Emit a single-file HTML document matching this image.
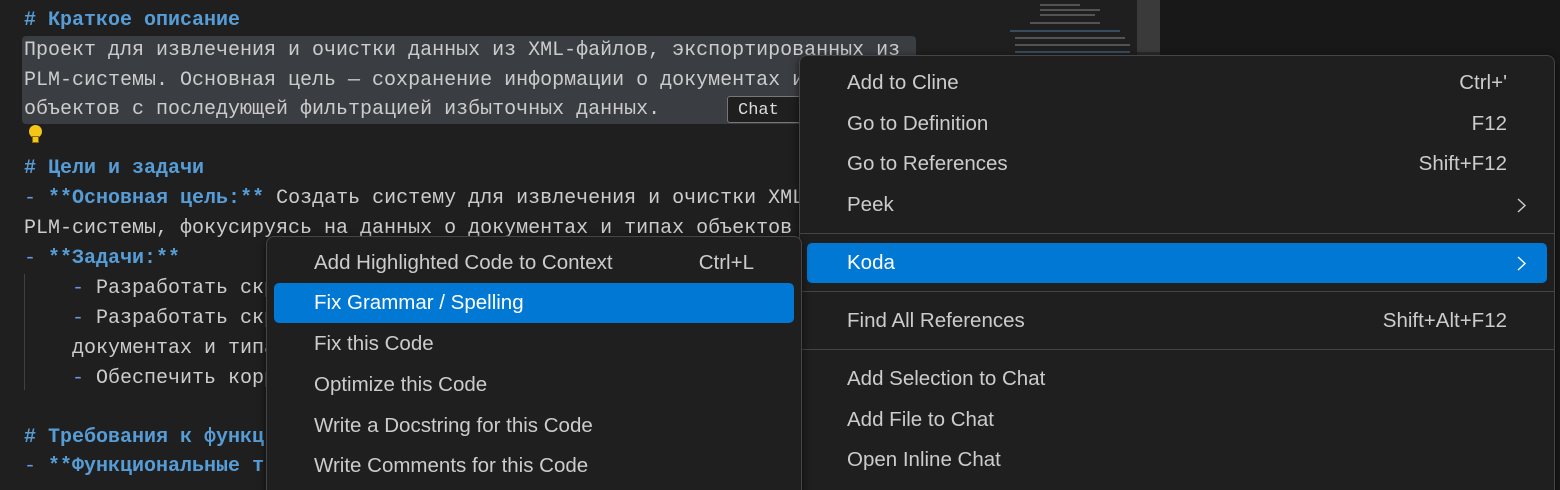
<!DOCTYPE html>
<html><head><meta charset="utf-8"><style>
html,body{margin:0;width:1560px;height:490px;overflow:hidden}
body{background:#1f1f1f;position:relative;font-family:"Liberation Mono","DejaVu Sans Mono",monospace;}
.ed{position:absolute;left:0;top:0;width:1160px;height:490px;background:#1f1f1f}
.right{position:absolute;left:1160px;top:0;width:400px;height:490px;background:#181818}
.sb{position:absolute;left:1137px;top:0;width:23px;height:490px;background:#2a2a2a}
.sbt{position:absolute;left:1137px;top:0;width:23px;height:52px;background:#3a3a3a}
.l{position:absolute;left:24px;font-size:20px;color:#cccccc;white-space:pre;line-height:30px;height:30px}
.h{color:#569cd6;font-weight:bold}
.b{color:#569cd6;font-weight:bold}
.d{color:#6796e6}
.sel{position:absolute;left:22px;top:36px;width:894px;height:88px;background:#3a3d41;border-radius:4px}
.guide{position:absolute;left:24px;width:1px;background:#404040}
.chat{position:absolute;left:727px;top:96px;width:80px;height:27px;border:1px solid #777;border-radius:3px;font-size:17px;color:#ddd;line-height:27px;padding-left:10px;box-sizing:border-box;background:#1f1f1f}
.menu{position:absolute;background:#1f1f1f;border:1px solid #454545;border-radius:8px;font-family:"Liberation Sans","DejaVu Sans",sans-serif;font-size:20.5px;color:#cccccc;box-shadow:0 2px 8px rgba(0,0,0,.6);overflow:hidden}
.it{position:absolute;height:40px;line-height:40px;border-radius:5px}
.it .t{position:absolute;left:40px}
.it .k{position:absolute;right:40px}
.hl{background:#0078d4;color:#fff}
.sep{position:absolute;height:1px;background:#454545;left:0;right:0}
.chev{position:absolute;right:20px;top:13px;width:10px;height:15px}
.mm{position:absolute;height:2px;background:#4a6a8a;opacity:.6}
</style></head><body>
<div class="ed"></div>
<div class="right"></div>
<div class="sb"></div><div class="sbt"></div>
<div class="mm" style="left:1040px;top:4px;width:40px;background:#777"></div>
<div class="mm" style="left:1040px;top:9px;width:60px;background:#777"></div>
<div class="mm" style="left:1040px;top:14px;width:55px;background:#777"></div>
<div class="mm" style="left:1030px;top:22px;width:70px;background:#777"></div>
<div class="mm" style="left:1010px;top:30px;width:110px"></div>
<div class="mm" style="left:1015px;top:37px;width:110px;background:#777"></div>
<div class="mm" style="left:1015px;top:44px;width:115px;background:#777"></div>
<div class="mm" style="left:1015px;top:51px;width:115px"></div>
<div class="sel"></div>
<div class="guide" style="top:274px;height:116px"></div>
<div class="l h" style="top:6px"># Краткое описание</div>
<div class="l" style="top:36px">Проект для извлечения и очистки данных из XML-файлов, экспортированных из</div>
<div class="l" style="top:66px">PLM-системы. Основная цель — сохранение информации о документах и</div>
<div class="l" style="top:95px">объектов с последующей фильтрацией избыточных данных.</div>
<div style="position:absolute;left:29px;top:125px;width:13px;height:13px;border-radius:50%;background:#f5c518"></div>
<div style="position:absolute;left:32px;top:136px;width:7px;height:7px;background:#f5c518;border:1px solid #8a6d00;box-sizing:border-box"></div>
<div class="l h" style="top:154px"># Цели и задачи</div>
<div class="l" style="top:184px"><span class="d">-</span> <span class="b">**Основная цель:**</span> Создать систему для извлечения и очистки XML</div>
<div class="l" style="top:214px">PLM-системы, фокусируясь на данных о документах и типах объектов</div>
<div class="l" style="top:244px"><span class="d">-</span> <span class="b">**Задачи:**</span></div>
<div class="l" style="top:274px">    <span class="d">-</span> Разработать скрипт</div>
<div class="l" style="top:304px">    <span class="d">-</span> Разработать скрипт</div>
<div class="l" style="top:334px">    документах и типах</div>
<div class="l" style="top:364px">    <span class="d">-</span> Обеспечить корр</div>
<div class="l h" style="top:423px"># Требования к функц</div>
<div class="l" style="top:452px"><span class="d">-</span> <span class="b">**Функциональные т</span></div>
<div class="chat">Chat</div>

<div class="menu" style="left:799px;top:55px;width:754px;height:445px">
<div class="it" style="left:7px;right:7px;top:7px"><span class="t">Add to Cline</span><span class="k">Ctrl+'</span></div>
<div class="it" style="left:7px;right:7px;top:48px"><span class="t">Go to Definition</span><span class="k">F12</span></div>
<div class="it" style="left:7px;right:7px;top:88px"><span class="t">Go to References</span><span class="k">Shift+F12</span></div>
<div class="it" style="left:7px;right:7px;top:129px"><span class="t">Peek</span><svg class="chev" viewBox="0 0 10 15"><path d="M1 1 L8 7.5 L1 14" fill="none" stroke="#cccccc" stroke-width="1.4"/></svg></div>
<div class="sep" style="top:177px"></div>
<div class="it hl" style="left:7px;right:7px;top:187px"><span class="t">Koda</span><svg class="chev" viewBox="0 0 10 15"><path d="M1 1 L8 7.5 L1 14" fill="none" stroke="#ffffff" stroke-width="1.4"/></svg></div>
<div class="sep" style="top:235px"></div>
<div class="it" style="left:7px;right:7px;top:245px"><span class="t">Find All References</span><span class="k">Shift+Alt+F12</span></div>
<div class="sep" style="top:293px"></div>
<div class="it" style="left:7px;right:7px;top:303px"><span class="t">Add Selection to Chat</span></div>
<div class="it" style="left:7px;right:7px;top:344px"><span class="t">Add File to Chat</span></div>
<div class="it" style="left:7px;right:7px;top:384px"><span class="t">Open Inline Chat</span></div>
</div>

<div class="menu" style="left:266px;top:236px;width:534px;height:270px">
<div class="it" style="left:7px;right:7px;top:6px"><span class="t">Add Highlighted Code to Context</span><span class="k">Ctrl+L</span></div>
<div class="it hl" style="left:7px;right:7px;top:46px"><span class="t">Fix Grammar / Spelling</span></div>
<div class="it" style="left:7px;right:7px;top:87px"><span class="t">Fix this Code</span></div>
<div class="it" style="left:7px;right:7px;top:128px"><span class="t">Optimize this Code</span></div>
<div class="it" style="left:7px;right:7px;top:169px"><span class="t">Write a Docstring for this Code</span></div>
<div class="it" style="left:7px;right:7px;top:209px"><span class="t">Write Comments for this Code</span></div>
</div>
</body></html>
